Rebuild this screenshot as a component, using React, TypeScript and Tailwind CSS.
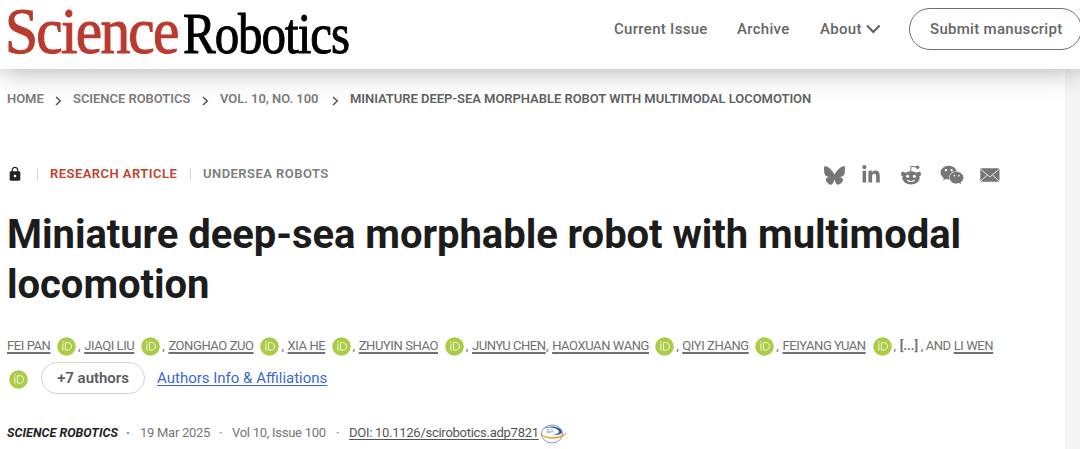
import { FC, Fragment } from "react";
import { FaBluesky, FaLinkedinIn } from "react-icons/fa6";
import { FaWeixin } from "react-icons/fa";
import { MdLock } from "react-icons/md";

interface Author {
  name: string;
  width: string;
  orcid: boolean;
}

const authors: Author[] = [
  { name: "FEI PAN", width: "w-[44px]", orcid: true },
  { name: "JIAQI LIU", width: "w-[51px]", orcid: true },
  { name: "ZONGHAO ZUO", width: "w-[86px]", orcid: true },
  { name: "XIA HE", width: "w-[38px]", orcid: true },
  { name: "ZHUYIN SHAO", width: "w-[80px]", orcid: true },
  { name: "JUNYU CHEN", width: "w-[74px]", orcid: false },
  { name: "HAOXUAN WANG", width: "w-[97px]", orcid: true },
  { name: "QIYI ZHANG", width: "w-[67px]", orcid: true },
  { name: "FEIYANG YUAN", width: "w-[84px]", orcid: true },
];

const crumbs = [
  { label: "HOME", width: "w-[48px]" },
  { label: "SCIENCE ROBOTICS", width: "w-[129px]" },
  { label: "VOL. 10, NO. 100", width: "w-[112px]" },
];

const Logo: FC = () => (
  <svg width="352" height="69" className="block" role="img" aria-label="Science Robotics">
    <text
      transform="translate(5 53) scale(0.9 1)"
      fill="#bb3a2e"
      stroke="#bb3a2e"
      strokeWidth="1.1"
      className="font-['Liberation_Serif',serif] text-[66px] tracking-[-1.9px]"
    >
      Science
    </text>
    <text
      transform="translate(183 53) scale(0.86 1)"
      fill="#000"
      stroke="#000"
      strokeWidth="1"
      className="font-['Liberation_Serif',serif] text-[57px] tracking-[-1.2px]"
    >
      Robotics
    </text>
  </svg>
);

const Orcid: FC = () => (
  <svg width="19" height="19" viewBox="0 0 19 19" fill="none" className="block shrink-0">
    <circle cx="9.5" cy="9.5" r="9.3" fill="#abcc46" />
    <g stroke="#f3f8dd" strokeWidth="1">
      <path d="M5.9 6.5V13.6" />
      <path d="M8.4 5.6H10.8C13.3 5.6 14.4 7.3 14.4 9.4S13.1 13.1 10.8 13.1H8.4Z" />
    </g>
    <circle cx="5.9" cy="4.7" r="0.7" fill="#f3f8dd" />
  </svg>
);

const Chevron: FC = () => (
  <svg width="7" height="10" viewBox="0 0 7 10" fill="none" stroke="#555" strokeWidth="1.5" className="mt-[3px]">
    <path d="M1 1L5.3 5L1 9" />
  </svg>
);

const Reddit: FC = () => (
  <svg width="22" height="20" viewBox="0 0 22 20" fill="none" className="ml-[19px]">
    <path d="M10.8 7V1.2L16 2" stroke="#767676" strokeWidth="1" />
    <circle cx="17.6" cy="2.2" r="1.8" fill="#767676" />
    <g fill="#767676">
      <circle cx="3.2" cy="9" r="2.3" />
      <circle cx="18.8" cy="9" r="2.3" />
      <ellipse cx="11" cy="12.8" rx="8.8" ry="6.6" />
    </g>
    <circle cx="7.6" cy="11.2" r="1.5" fill="#fff" />
    <circle cx="14.4" cy="11.2" r="1.5" fill="#fff" />
    <path d="M7.3 15.3C9.2 16.8 12.8 16.8 14.7 15.3" stroke="#fff" strokeWidth="1.1" />
  </svg>
);

const Mail: FC = () => (
  <svg width="20" height="14" viewBox="0 0 20 14" fill="none">
    <rect x="0.3" y="0.3" width="19.2" height="13.4" rx="1.6" fill="#767676" />
    <path d="M1 1.5L9.9 9L18.8 1.5M1 12.8L7.3 7M18.8 12.8L12.5 7" stroke="#e8e8e8" strokeWidth="1" />
  </svg>
);

const PlanetBadge: FC = () => (
  <svg width="27" height="20" viewBox="0 0 27 20" fill="none" className="mt-[2px]">
    <ellipse cx="12" cy="10" rx="10.5" ry="9" fill="#fff" stroke="#6b8fc5" strokeWidth="0.9" />
    <path d="M2.5 5C8 1 19 1.5 22 7C23 10 18 11.5 12 11C18 10.3 20 8.8 18.5 6.5C15.5 2.8 8 2.8 2.5 5Z" fill="#2859a8" />
    <path d="M0.8 9.3C2 14.5 20 15 26.4 8.8C24.2 12.8 19 14.6 13 14.4C6 14.2 0.2 12.6 0.8 9.3Z" fill="#eda12e" stroke="#eda12e" strokeWidth="0.6" />
    <text x="6.2" y="8.7" fill="#7898c8" className="font-['Liberation_Sans',sans-serif] text-[5px]">
      IEA
    </text>
  </svg>
);

const Header: FC = () => (
  <header className="relative flex h-[69px] justify-between bg-white text-[15px] font-medium tracking-[0.3px] text-[#666] shadow-[0_0_28px_rgba(0,0,0,0.36)]">
    <Logo />
    <nav className="mt-2 flex h-[42px] shrink-0 items-center whitespace-nowrap">
      <span className="w-[123px]">Current Issue</span>
      <span className="w-[83px]">Archive</span>
      <span className="w-[46px]">About</span>
      <svg width="16" height="10" viewBox="0 0 16 10" fill="none" stroke="#606060" strokeWidth="2">
        <path d="M1 1.5L7.3 8L13.6 1.5" />
      </svg>
      <button className="-mr-[2px] ml-[27px] h-[42px] w-[173px] rounded-full border border-[#707070] pl-5 text-left">
        Submit manuscript
      </button>
    </nav>
  </header>
);

const App: FC = () => {
  return (
    <div className="h-[449px] w-[1080px] overflow-hidden bg-[#f4f4f4] font-[Roboto,sans-serif]">
      <Header />
      <main className="h-[380px] w-[1065px] bg-white pl-[7px] whitespace-nowrap">
        <div className="flex h-[60px] items-center text-[13px] font-semibold tracking-[-0.04px] text-[#7c7c7c]">
          {crumbs.map((crumb) => (
            <Fragment key={crumb.label}>
              <span className={crumb.width}>{crumb.label}</span>
              <Chevron />
              <span className="w-[11px]" />
            </Fragment>
          ))}
          <span className="text-[#626262]">MINIATURE DEEP-SEA MORPHABLE ROBOT WITH MULTIMODAL LOCOMOTION</span>
        </div>

        <div className="mt-[30px] flex h-[30px] items-center text-[13px] font-semibold tracking-[0.46px]">
          <MdLock size={16} color="#222" />
          <span className="ml-[14px] h-3 border-l border-[#d8d8d8]" />
          <span className="ml-3 w-[140px] text-[#c5402d]">RESEARCH ARTICLE</span>
          <span className="h-3 border-l border-[#d8d8d8]" />
          <span className="ml-3 text-[#7c7c7c]">UNDERSEA ROBOTS</span>
          <div className="mt-[2px] mr-[65px] ml-auto flex items-center text-[#767676]">
            <FaBluesky size={21} />
            <FaLinkedinIn size={20} className="ml-4" />
            <Reddit />
            <FaWeixin size={24} className="mr-4 ml-[18px]" />
            <Mail />
          </div>
        </div>

        <h1 className="mt-[21px] text-[40px] leading-[50px] font-bold tracking-[-0.05px] text-[#1c1c1c]">
          Miniature deep-sea morphable robot with multimodal
          <br />
          locomotion
        </h1>

        <div className="mt-[21px] flex h-[30px] items-center text-[13px] tracking-[-0.42px] text-[#707070]">
          {authors.map((author) => (
            <Fragment key={author.name}>
              <span className={`${author.width} shrink-0 underline decoration-2 underline-offset-2`}>{author.name}</span>
              {author.orcid && (
                <span className="mr-[2px] ml-[6px]">
                  <Orcid />
                </span>
              )}
              <span className="w-[6.2px] shrink-0">,</span>
            </Fragment>
          ))}
          <span className="w-[21px] font-bold tracking-normal">[...]</span>
          <span className="w-[5px]">,</span>
          <span className="w-[28px]">AND</span>
          <span className="underline decoration-2 underline-offset-2">LI WEN</span>
        </div>

        <div className="mt-px flex h-8 items-center">
          <span className="mt-[3px] ml-[2px]">
            <Orcid />
          </span>
          <button className="ml-[13px] h-8 w-[104px] rounded-full border border-[#d5d5d5] text-[15px] font-semibold tracking-[-0.03px] text-[#5c5c5c]">
            +7 authors
          </button>
          <a className="ml-3 text-[15px] text-[#3c68cc] underline underline-offset-2">Authors Info &amp; Affiliations</a>
        </div>

        <div className="mt-6 flex h-[30px] items-center text-[13px] tracking-[-0.27px] text-[#767676]">
          <span className="w-[119px] text-[12.5px] font-bold tracking-[0.03px] text-[#222] italic">SCIENCE ROBOTICS</span>
          <span className="w-[14px] font-bold">·</span>
          <span className="w-[79px]">19 Mar 2025</span>
          <span className="w-[13px]">·</span>
          <span className="w-[104px]">Vol 10, Issue 100</span>
          <span className="w-[13px]">·</span>
          <a className="w-[191px] text-[#555] underline underline-offset-2">DOI: 10.1126/scirobotics.adp7821</a>
          <PlanetBadge />
        </div>
      </main>
    </div>
  );
};

export default App;
